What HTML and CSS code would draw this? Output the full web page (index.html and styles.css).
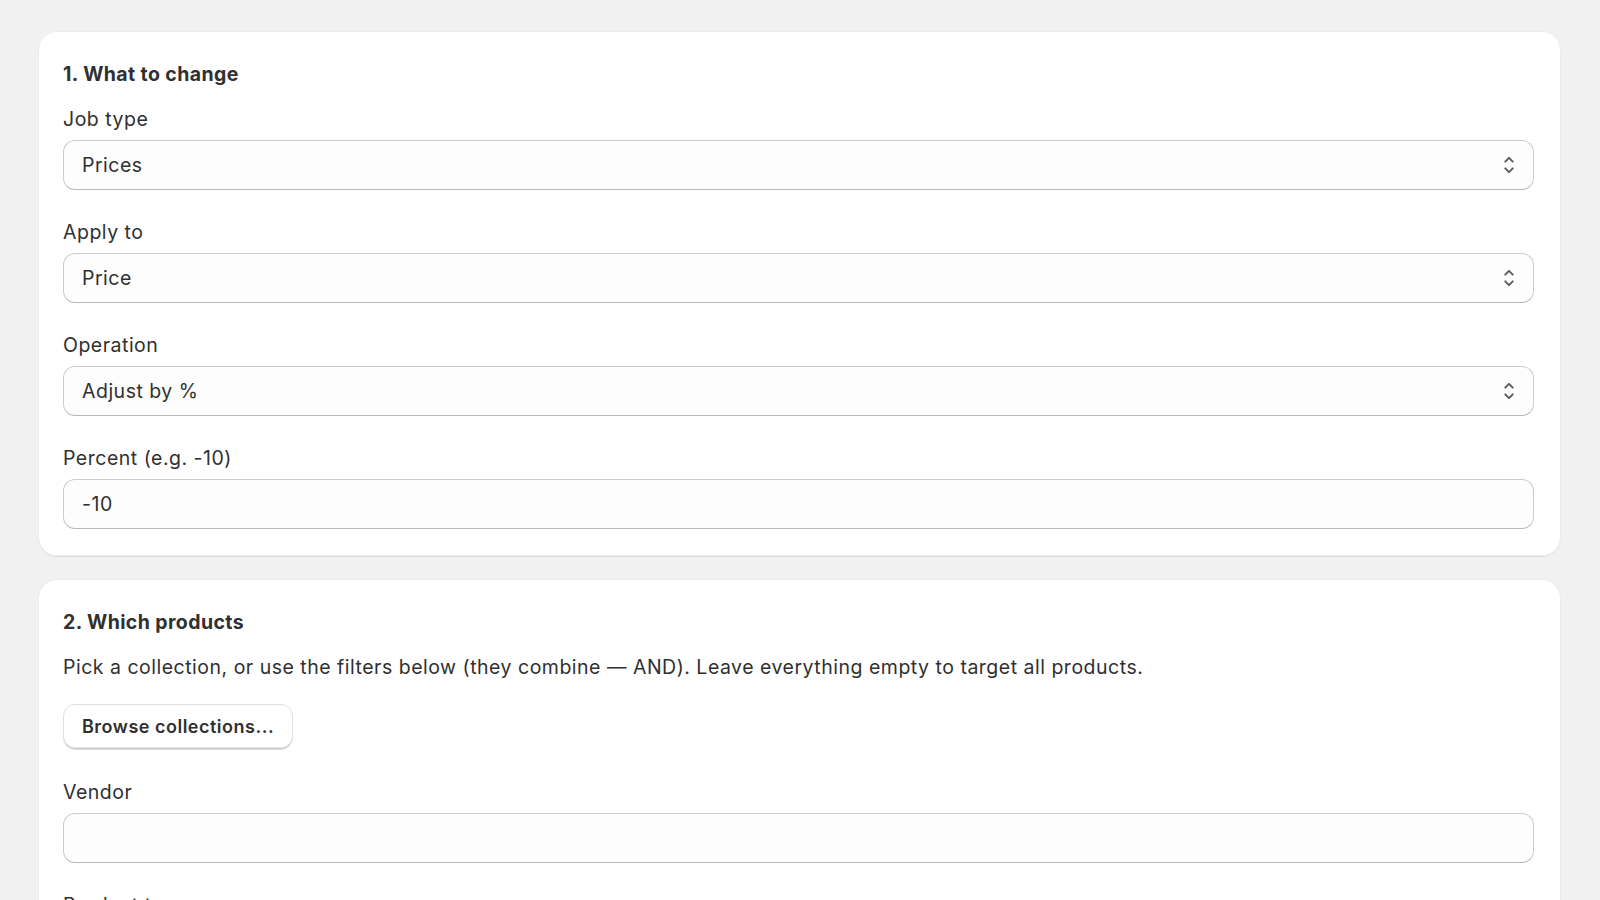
FILE: index.html
```html
<!doctype html>
<html lang="en">
  <head>
    <meta charset="UTF-8" />
    <meta name="viewport" content="width=device-width, initial-scale=1.0" />
    <title>Bulk edit job</title>
    <link rel="stylesheet" href="styles.css">
  </head>
  <body>
    <main class="page">
      <!-- Section 1: the field and operation -->
      <section class="card">
        <h2 class="card-title">1. What to change</h2>

        <div class="field">
          <label class="label" for="jobType">Job type</label>
          <div class="select-wrap">
            <select class="input select" id="jobType">
              <option>Prices</option>
            </select>
            <svg class="select-icon" viewBox="0 0 20 20" aria-hidden="true">
              <path d="M7.5 7.75 10 5.25l2.5 2.5M7.5 12.25 10 14.75l2.5-2.5" />
            </svg>
          </div>
        </div>

        <div class="field">
          <label class="label" for="applyTo">Apply to</label>
          <div class="select-wrap">
            <select class="input select" id="applyTo">
              <option>Price</option>
            </select>
            <svg class="select-icon" viewBox="0 0 20 20" aria-hidden="true">
              <path d="M7.5 7.75 10 5.25l2.5 2.5M7.5 12.25 10 14.75l2.5-2.5" />
            </svg>
          </div>
        </div>

        <div class="field">
          <label class="label" for="operation">Operation</label>
          <div class="select-wrap">
            <select class="input select" id="operation">
              <option>Adjust by %</option>
            </select>
            <svg class="select-icon" viewBox="0 0 20 20" aria-hidden="true">
              <path d="M7.5 7.75 10 5.25l2.5 2.5M7.5 12.25 10 14.75l2.5-2.5" />
            </svg>
          </div>
        </div>

        <div class="field">
          <label class="label" for="percent">Percent (e.g. -10)</label>
          <input class="input" id="percent" type="text" value="-10" />
        </div>
      </section>

      <!-- Section 2: product targeting -->
      <section class="card">
        <h2 class="card-title">2. Which products</h2>
        <p class="help">
          Pick a collection, or use the filters below (they combine — AND). Leave everything empty to target all products.
        </p>

        <div class="actions">
          <button class="button" type="button">Browse collections...</button>
        </div>

        <div class="field">
          <label class="label" for="vendor">Vendor</label>
          <input class="input" id="vendor" type="text" />
        </div>

        <div class="field">
          <label class="label" for="productType">Product type</label>
          <input class="input" id="productType" type="text" />
        </div>
      </section>
    </main>
  </body>
</html>
```

FILE: styles.css
```css
* {
  margin: 0;
  padding: 0;
  box-sizing: border-box;
}

body {
  font-family: Inter, 'Noto Sans', Arial, sans-serif;
  background: #f1f1f1;
  color: #303030;
  font-size: 19.5px;
  line-height: 30px;
  letter-spacing: 0.5px;
}

.page {
  display: flex;
  flex-direction: column;
  gap: 24px;
  padding: 32px 40px 40px 39px;
}

.card {
  background: #fff;
  border-radius: 18px;
  box-shadow:
    0 1px 0 0 rgba(26, 26, 26, 0.07),
    0 0 0 1px rgba(0, 0, 0, 0.02),
    inset 0 -1px 0 0 #ececec;
  padding: 27px 26px 27px 24px;
  display: flex;
  flex-direction: column;
}

.card-title {
  font-size: 19.5px;
  font-weight: 650;
  line-height: 30px;
  letter-spacing: 0.4px;
  margin-bottom: 15px;
}

.help {
  margin-bottom: 22px;
}

.field + .field {
  margin-top: 27px;
}

.actions + .field {
  margin-top: 27px;
}

.label {
  display: block;
  margin-bottom: 6px;
}

.input {
  display: block;
  width: 100%;
  height: 50px;
  padding: 0 18px;
  font: inherit;
  letter-spacing: inherit;
  color: #303030;
  background: #fdfdfd;
  border: 1.5px solid #cccccc;
  border-bottom-color: #b8b8b8;
  border-radius: 12px;
  outline: none;
}

.select-wrap {
  position: relative;
}

.select {
  appearance: none;
  -webkit-appearance: none;
  padding-right: 48px;
}

.select-icon {
  position: absolute;
  right: 10px;
  top: 10px;
  width: 30px;
  height: 30px;
  fill: none;
  stroke: #5c5c5c;
  stroke-width: 1.3;
  stroke-linecap: round;
  stroke-linejoin: round;
  pointer-events: none;
}

.button {
  font: inherit;
  font-size: 18px;
  font-weight: 600;
  letter-spacing: 0.5px;
  color: #303030;
  background: #fff;
  height: 46px;
  padding: 0 18px;
  border: 1px solid #dedede;
  border-radius: 12px;
  box-shadow: inset 0 -1.5px 0 0 #cccccc;
  cursor: pointer;
}
```
